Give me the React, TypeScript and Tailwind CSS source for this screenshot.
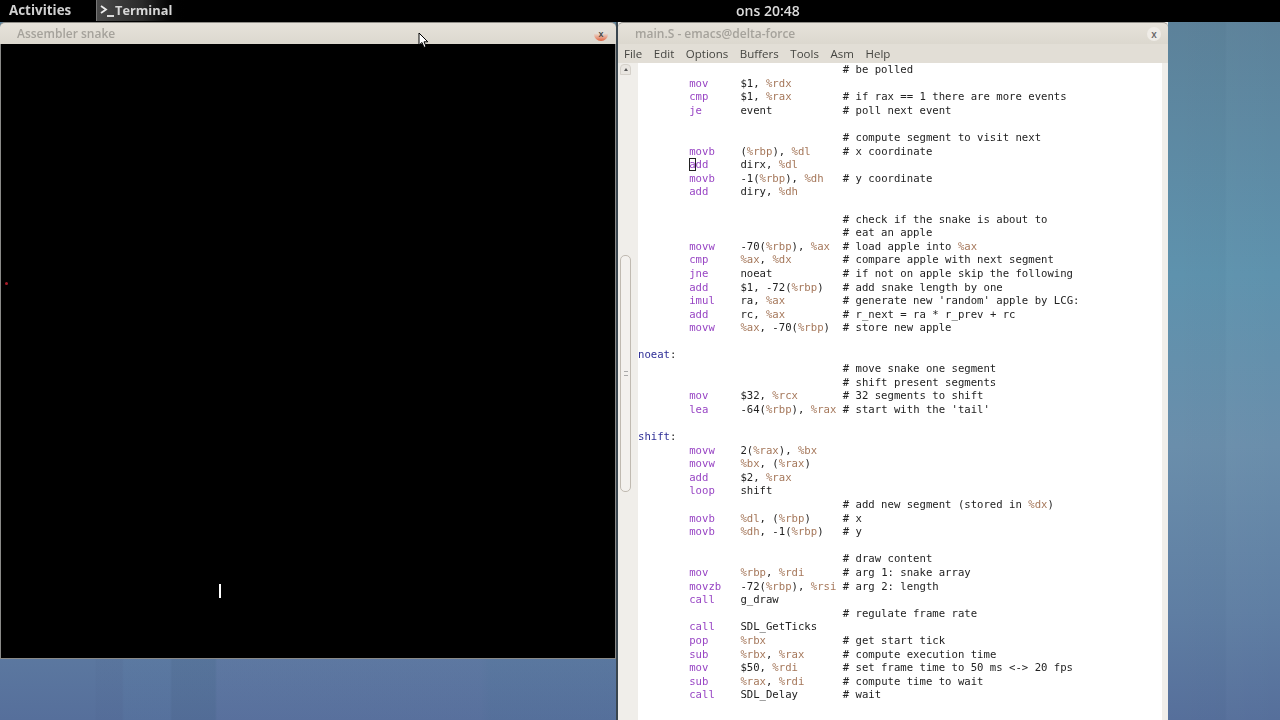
const code: (string | string[])[] = [
  ["", "", "# be polled"],
  ["mov", "$1, %rdx", ""],
  ["cmp", "$1, %rax", "# if rax == 1 there are more events"],
  ["je", "event", "# poll next event"],
  [],
  ["", "", "# compute segment to visit next"],
  ["movb", "(%rbp), %dl", "# x coordinate"],
  ["add", "dirx, %dl", ""],
  ["movb", "-1(%rbp), %dh", "# y coordinate"],
  ["add", "diry, %dh", ""],
  [],
  ["", "", "# check if the snake is about to"],
  ["", "", "# eat an apple"],
  ["movw", "-70(%rbp), %ax", "# load apple into %ax"],
  ["cmp", "%ax, %dx", "# compare apple with next segment"],
  ["jne", "noeat", "# if not on apple skip the following"],
  ["add", "$1, -72(%rbp)", "# add snake length by one"],
  ["imul", "ra, %ax", "# generate new 'random' apple by LCG:"],
  ["add", "rc, %ax", "# r_next = ra * r_prev + rc"],
  ["movw", "%ax, -70(%rbp)", "# store new apple"],
  [],
  "noeat:",
  ["", "", "# move snake one segment"],
  ["", "", "# shift present segments"],
  ["mov", "$32, %rcx", "# 32 segments to shift"],
  ["lea", "-64(%rbp), %rax", "# start with the 'tail'"],
  [],
  "shift:",
  ["movw", "2(%rax), %bx", ""],
  ["movw", "%bx, (%rax)", ""],
  ["add", "$2, %rax", ""],
  ["loop", "shift", ""],
  ["", "", "# add new segment (stored in %dx)"],
  ["movb", "%dl, (%rbp)", "# x"],
  ["movb", "%dh, -1(%rbp)", "# y"],
  [],
  ["", "", "# draw content"],
  ["mov", "%rbp, %rdi", "# arg 1: snake array"],
  ["movzb", "-72(%rbp), %rsi", "# arg 2: length"],
  ["call", "g_draw", ""],
  ["", "", "# regulate frame rate"],
  ["call", "SDL_GetTicks", ""],
  ["pop", "%rbx", "# get start tick"],
  ["sub", "%rbx, %rax", "# compute execution time"],
  ["mov", "$50, %rdi", "# set frame time to 50 ms <-> 20 fps"],
  ["sub", "%rax, %rdi", "# compute time to wait"],
  ["call", "SDL_Delay", "# wait"],
];

// colour the registers
function Regs({ text }: { text: string }) {
  return (
    <>
      {text.split(/(%[a-z]+)/).map((part, i) =>
        part.startsWith("%") ? (
          <span key={i} className="text-[#a5775a]">
            {part}
          </span>
        ) : (
          part
        )
      )}
    </>
  );
}

function CodeLine({ line, index }: { line: string | string[]; index: number }) {
  if (typeof line === "string") {
    return <div className="h-[13.6px] text-[#2e2e96]">{line.slice(0, -1)}<span className="text-[#222]">:</span></div>;
  }
  if (line.length === 0) return <div className="h-[13.6px]" />;
  const [op, args, note] = line;
  const isCursor = index === 7;
  return (
    <div className="h-[13.6px]">
      {"        "}
      <span className="text-[#9845c4]">
        {isCursor ? (
          <>
            <span className="outline outline-1 -outline-offset-1 outline-[#222]">{op[0]}</span>
            {op.slice(1)}
          </>
        ) : (
          op
        )}
      </span>
      {" ".repeat(8 - op.length)}
      <Regs text={args} />
      {note && " ".repeat(16 - args.length)}
      {note && <Regs text={note} />}
    </div>
  );
}

function TitleBar({ title, children }: { title: string; children: React.ReactNode }) {
  return (
    <div className="h-[22px] shrink-0 rounded-t-[5px] border-t border-[#8f8d88] bg-gradient-to-b from-[#e6e2da] to-[#dcd8cf] flex items-center justify-between font-['Open_Sans',sans-serif] text-[12px] font-semibold text-[#a5a29b]">
      <span className="pl-[17px] blur-[0.4px]">{title}</span>
      {children}
    </div>
  );
}

export default function App() {
  return (
    <div className="relative w-[1280px] h-[720px] overflow-hidden flex flex-col bg-[linear-gradient(90deg,rgba(0,0,0,0)_95px,rgba(40,50,90,0.03)_96px,rgba(40,50,90,0.03)_122px,rgba(90,150,190,0.05)_124px,rgba(90,150,190,0.05)_170px,rgba(30,70,90,0.07)_172px,rgba(30,70,90,0.07)_215px,rgba(130,130,190,0.06)_217px,rgba(130,130,190,0.05)_480px,rgba(60,120,150,0.04)_490px,rgba(60,120,150,0.04)_620px,rgba(0,0,0,0)_1170px,rgba(0,0,0,0.01)_1225px,rgba(255,255,255,0.015)_1227px,rgba(0,0,0,0)_1280px),linear-gradient(180deg,#5c8098_0%,#5e92ad_38%,#6a8eab_62%,#5f7ea3_85%,#566f9b_100%)]">
      {/* top panel */}
      <div className="h-[22px] shrink-0 pb-[1px] bg-black flex items-center font-['Open_Sans',sans-serif] text-[13.4px] font-bold text-[#d0d0d0]">
        <span className="ml-[9px] w-[64px] blur-[0.4px]">Activities</span>
        <div className="ml-[23px] w-[92px] h-full pl-[3px] flex items-center bg-gradient-to-r from-[#4a4a4a] via-[#2a2a2a] to-black border-l border-[#777]">
          <svg width="15" height="16" viewBox="0 0 15 16" className="shrink-0" fill="none" stroke="#eee" strokeWidth="1.8">
            <path d="M1 3 L6 6.5 L1 10" />
            <path d="M7 13 H14" />
          </svg>
          <span className="text-[12.8px] text-[#d8d8d8] blur-[0.4px]">Terminal</span>
        </div>
        <span className="ml-[548px] text-[14px] font-semibold text-[#dcdcdc] blur-[0.4px]">ons 20:48</span>
      </div>

      <div className="flex items-start">
        {/* game window */}
        <div className="w-[616px] h-[637px] flex flex-col shrink-0">
          <TitleBar title="Assembler snake">
            <span className="mr-[8px] w-[14px] h-[14px] rounded-full bg-gradient-to-b from-[#e4dfd8] from-45% to-[#e0603a] flex items-center justify-center text-[9px] leading-none text-[#444]">
              x
            </span>
          </TitleBar>
          <div className="relative flex-1 bg-black border-l border-r border-b border-[#8a8a88]">
            <div className="absolute left-[4px] top-[238px] w-[3px] h-[3px] rounded-full bg-[#a81c28]" />
            <div className="absolute left-[218px] top-[540px] w-[2px] h-[14px] bg-white" />
          </div>
        </div>

        <div className="w-[2px] h-[698px] shrink-0 bg-[#39454e]" />

        {/* emacs */}
        <div className="w-[550px] h-[698px] flex flex-col shrink-0 bg-[#f0eeea]">
          <TitleBar title="main.S - emacs@delta-force">
            <span className="mr-[7px] w-[14px] h-[14px] rounded-full bg-[#efece7] flex items-center justify-center text-[10px] leading-none text-[#666]">
              x
            </span>
          </TitleBar>
          <div className="h-[19px] shrink-0 flex items-center pl-[6px] gap-[11.6px] bg-[#e2ded6] font-['Open_Sans',sans-serif] text-[11.5px] text-[#454541] blur-[0.4px]">
            {["File", "Edit", "Options", "Buffers", "Tools", "Asm", "Help"].map((m) => (
              <span key={m}>{m}</span>
            ))}
          </div>
          <div className="flex-1 flex min-h-0">
            <div className="w-[20px] shrink-0 pl-[2px] pr-[6px] pt-[1px] flex flex-col">
              <div className="h-[11px] w-[11px] rounded-t-[4px] bg-[#e9e6e1] border border-[#d5d1ca] flex items-center justify-center">
                <div className="w-0 h-0 border-x-[2.5px] border-x-transparent border-b-[3px] border-b-[#555]" />
              </div>
              <div className="mt-[180px] w-[11px] h-[237px] rounded-[5px] bg-[#f3f1ee] border border-[#c0bab1] flex items-center justify-center">
                <span className="w-[4px] h-[5px] border-y border-[#aaa]" />
              </div>
            </div>
            <div className="w-[524px] shrink-0 bg-white font-['DejaVu_Sans_Mono',monospace] text-[10.63px] leading-[13.6px] whitespace-pre text-[#222]">
              <div className="blur-[0.4px]">
                {code.map((line, i) => (
                  <CodeLine key={i} line={line} index={i} />
                ))}
              </div>
            </div>
          </div>
        </div>
      </div>

      {/* mouse pointer */}
      <svg width="11" height="17" viewBox="0 0 11 17" className="absolute left-[418px] top-[32px]">
        <path d="M1 1 V13 L4 10.5 L6 15.5 L8 14.5 L6 9.8 H9.8 Z" fill="#fff" stroke="#000" strokeWidth="1" />
      </svg>
    </div>
  );
}
